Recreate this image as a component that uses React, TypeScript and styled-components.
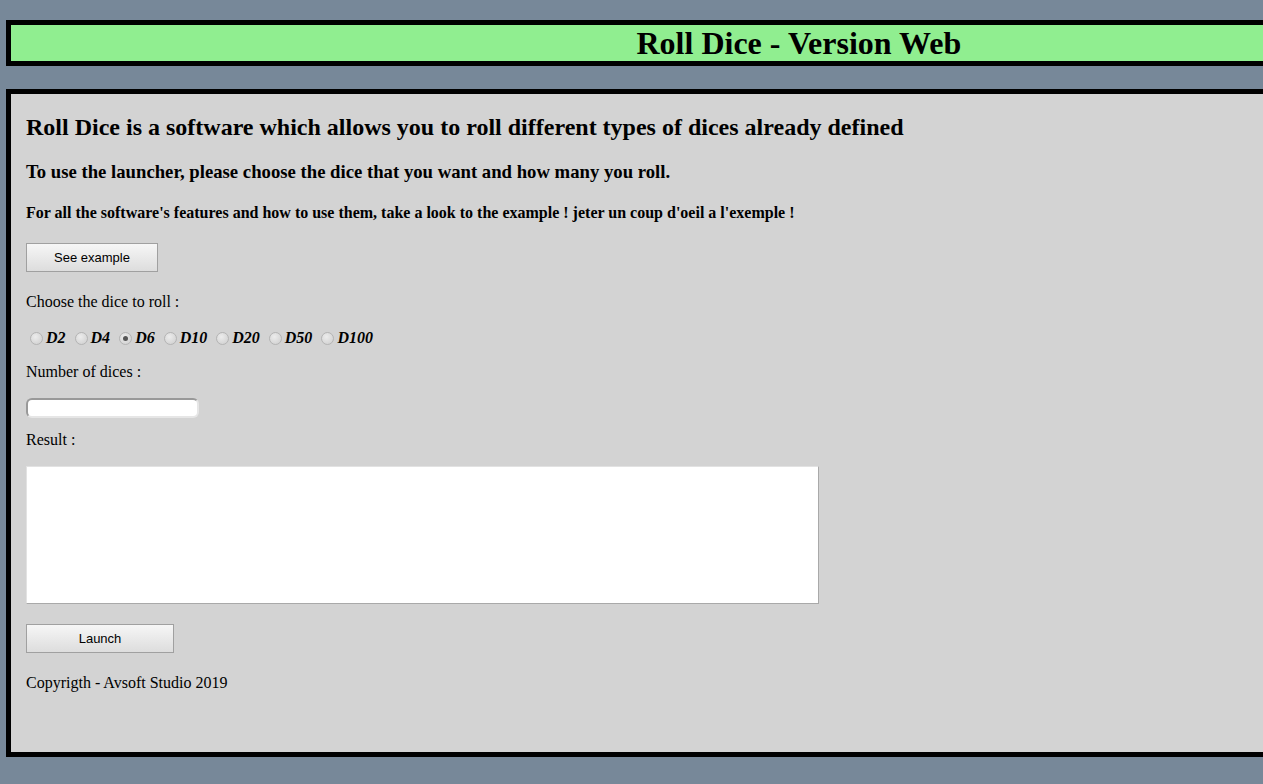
import styled, { createGlobalStyle } from "styled-components";

const GlobalStyle = createGlobalStyle`
   html, body {
      margin: 0;
      padding: 0;
      background: #778899;
      overflow: hidden;
   }
   body {
      font-family: "Liberation Serif", "Times New Roman", serif;
      font-size: 16px;
      color: #000;
   }
`;

const Page = styled.div`
   padding: 20px 0 27px 6px;
   display: flex;
   flex-direction: column;
   gap: 23px;
`;

const Header = styled.header`
   width: calc(100% + 40px);
   height: 46px;
   box-sizing: border-box;
   border: 5px solid #000;
   background: #90ee90;
   display: flex;
   align-items: center;
   padding-left: calc(50% - 3px);
`;

const Title = styled.h1`
   margin: 0;
   font-size: 32px;
   font-weight: bold;
   line-height: 1;
`;

const Main = styled.main`
   width: calc(100% + 40px);
   height: 668px;
   box-sizing: border-box;
   border: 5px solid #000;
   background: #d3d3d3;
   padding: 0 15px;
   display: flex;
   flex-direction: column;
   align-items: flex-start;
`;

const Heading = styled.h2<{ size: number; lh: number; top: number }>`
   margin: ${(p) => p.top}px 0 0;
   font-size: ${(p) => p.size}px;
   line-height: ${(p) => p.lh}px;
   font-weight: bold;
`;

const Label = styled.p<{ top: number }>`
   margin: ${(p) => p.top}px 0 0;
   font-size: 16px;
   line-height: 18px;
`;

const Button = styled.button<{ w: number; top: number }>`
   margin-top: ${(p) => p.top}px;
   width: ${(p) => p.w}px;
   height: 29px;
   font-family: "Liberation Sans", Arial, sans-serif;
   font-size: 13px;
   color: #000;
   border: 1px solid #a0a0a0;
   border-radius: 0;
   background: linear-gradient(#f6f6f6, #dddddd);
   padding: 0;
`;

const RadioRow = styled.div`
   margin: 18px 0 0 4px;
   height: 18px;
   display: flex;
   align-items: center;
   gap: 9px;
`;

const RadioItem = styled.label`
   display: flex;
   align-items: center;
   gap: 3px;
   font-size: 16px;
   line-height: 18px;
   font-weight: bold;
   font-style: italic;
`;

const RadioDot = styled.span<{ checked?: boolean }>`
   flex: 0 0 13px;
   width: 13px;
   height: 13px;
   border-radius: 50%;
   box-sizing: border-box;
   border: 1px solid #b4b4b4;
   background: radial-gradient(circle at 40% 35%, #ececec, #cdcdcd);
   display: flex;
   align-items: center;
   justify-content: center;
   &::after {
      content: "";
      width: 5px;
      height: 5px;
      border-radius: 50%;
      background: ${(p) => (p.checked ? "#555" : "transparent")};
   }
`;

const NumberInput = styled.input`
   margin-top: 17px;
   width: 173px;
   height: 20px;
   box-sizing: border-box;
   border: 2px solid #e6e6e6;
   border-top-color: #999;
   border-left-color: #999;
   border-radius: 6px;
   background: #fff;
   outline: none;
`;

const Result = styled.textarea`
   margin-top: 17px;
   width: 793px;
   height: 138px;
   box-sizing: border-box;
   border: 1px solid #a9a9a9;
   border-top-color: #e2e2e2;
   border-left-color: #e2e2e2;
   background: #fff;
   resize: none;
   outline: none;
`;

const dice = ["D2", "D4", "D6", "D10", "D20", "D50", "D100"];

const App: React.FC = () => {
   return (
      <>
         <GlobalStyle />
         <Page>
            <Header>
               <Title>Roll Dice - Version Web</Title>
            </Header>
            <Main>
               <Heading size={24} lh={28} top={19}>
                  Roll Dice is a software which allows you to roll different
                  types of dices already defined
               </Heading>
               <Heading size={18.72} lh={22} top={20}>
                  To use the launcher, please choose the dice that you want and
                  how many you roll.
               </Heading>
               <Heading size={16} lh={19} top={20}>
                  For all the software's features and how to use them, take a
                  look to the example ! jeter un coup d'oeil a l'exemple !
               </Heading>
               <Button w={132} top={21}>
                  See example
               </Button>
               <Label top={21}>Choose the dice to roll :</Label>
               <RadioRow>
                  {dice.map((d) => (
                     <RadioItem key={d}>
                        <RadioDot checked={d === "D6"} />
                        {d}
                     </RadioItem>
                  ))}
               </RadioRow>
               <Label top={16}>Number of dices :</Label>
               <NumberInput type="text" />
               <Label top={13}>Result :</Label>
               <Result />
               <Button w={148} top={20}>
                  Launch
               </Button>
               <Label top={21}>Copyrigth - Avsoft Studio 2019</Label>
            </Main>
         </Page>
      </>
   );
};

export default App;
